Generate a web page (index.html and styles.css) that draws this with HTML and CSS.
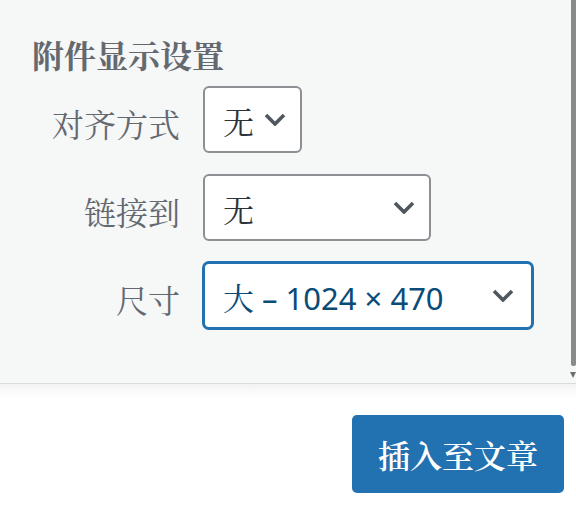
FILE: index.html
```html
<!DOCTYPE html>
<html lang="zh-CN">
<head>
<meta charset="utf-8">
<title>附件显示设置</title>
<link rel="stylesheet" href="styles.css">
</head>
<body>
<div class="panel">
  <h2 class="heading">附件显示设置</h2>
  <div class="settings">
    <span class="label">对齐方式</span>
    <div class="select select-align">
      <span class="value">无</span>
      <svg class="chev" width="22" height="13" viewBox="0 0 22 13"><polyline points="2,2 11,11 20,2" fill="none" stroke="#50575e" stroke-width="3.6"/></svg>
    </div>
    <span class="label">链接到</span>
    <div class="select select-link">
      <span class="value">无</span>
      <svg class="chev" width="22" height="13" viewBox="0 0 22 13"><polyline points="2,2 11,11 20,2" fill="none" stroke="#50575e" stroke-width="3.6"/></svg>
    </div>
    <span class="label">尺寸</span>
    <div class="select select-size focused">
      <span class="value">大 – 1024 × 470</span>
      <svg class="chev" width="22" height="13" viewBox="0 0 22 13"><polyline points="2,2 11,11 20,2" fill="none" stroke="#50575e" stroke-width="3.6"/></svg>
    </div>
  </div>
  <div class="scrollbar"></div>
  <svg class="scroll-arrow" width="6" height="8" viewBox="0 0 6 8"><polygon points="3,8 0,2 6,2" fill="#6e6e6e"/></svg>
</div>
<div class="toolbar">
  <button class="insert">插入至文章</button>
</div>
</body>
</html>
```
FILE: styles.css
```css
html, body {
  margin: 0;
  padding: 0;
  background: #fff;
}
body {
  width: 576px;
  height: 510px;
  overflow: hidden;
  font-family: "Noto Serif CJK SC", "Noto Sans CJK SC", serif;
}
.panel {
  position: relative;
  background: #f6f7f7;
  height: 384px;
  box-sizing: border-box;
  padding: 32px 0 0 32px;
  border-bottom: 1px solid #dcdcde;
}
.heading {
  margin: 0;
  font-size: 32px;
  line-height: 44px;
  font-weight: 700;
  color: #646970;
}
.settings {
  margin-top: 10px;
  display: grid;
  grid-template-columns: 148px auto;
  column-gap: 23px;
  row-gap: 21px;
  align-items: center;
  justify-items: start;
}
.label {
  justify-self: end;
  font-size: 32px;
  line-height: 40px;
  color: #646970;
  padding-top: 6px;
}
.select {
  box-sizing: border-box;
  height: 67px;
  background: #fff;
  border: 2px solid #8c8f94;
  border-radius: 6px;
  display: flex;
  align-items: center;
  justify-content: space-between;
  padding: 0 14px 0 18px;
  color: #2c3338;
  font-family: "Noto Sans", "Noto Serif CJK SC", "Noto Sans CJK SC", sans-serif;
  font-size: 31px;
}
.value {
  line-height: 40px;
  padding-top: 4px;
}
.select-align { width: 99px; }
.select-link { width: 228px; }
.select-size { width: 330px; }
.focused {
  border-color: #2271b1;
  box-shadow: 0 0 0 1px #2271b1;
  color: #0a4b78;
  padding-right: 17px;
}
.chev { display: block; }
.scrollbar {
  position: absolute;
  top: 0;
  right: 0;
  width: 5px;
  height: 366px;
  background: #8a8a8a;
  border-radius: 0 0 2px 2px;
}
.scroll-arrow {
  position: absolute;
  right: 0;
  top: 370px;
}
.toolbar {
  height: 125px;
  background: linear-gradient(#f3f3f3 0, #fafafa 8px, #fff 14px);
  display: flex;
  justify-content: flex-end;
  align-items: flex-start;
  padding: 31px 12px 0 0;
  box-sizing: border-box;
}
.insert {
  width: 212px;
  height: 78px;
  background: #2271b1;
  border: none;
  border-radius: 5px;
  color: #fff;
  font-family: "Noto Serif CJK SC", "Noto Sans CJK SC", serif;
  font-size: 32px;
  font-weight: 600;
  padding: 0;
}
```
